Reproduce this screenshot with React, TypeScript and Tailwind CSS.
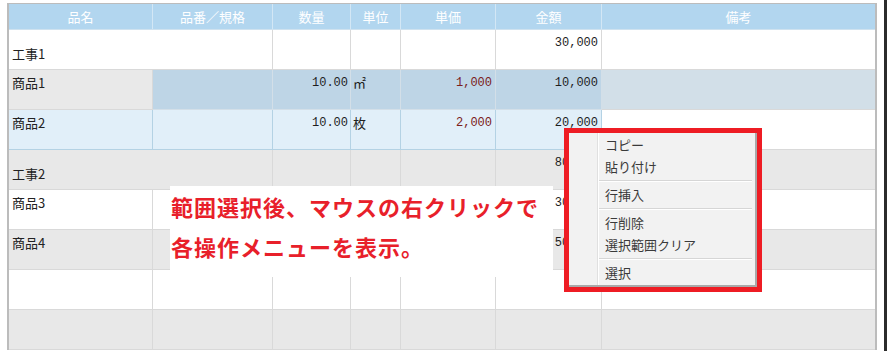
import React from "react";

const COLS = "grid grid-cols-[144px_120px_78px_50px_95px_106px_273px]";

const jp = { fontFamily: '"Noto Sans CJK JP", "Noto Sans", sans-serif' };
const mono = { fontFamily: '"Liberation Mono", "Noto Sans CJK JP", monospace' };

function NameCell({ text, bg, koji, span2, border }: { text: string; bg: string; koji?: boolean; span2?: boolean; border: string }) {
  return (
    <div
      className={`${span2 ? "col-span-2" : ""} ${bg} ${border} border-r border-b h-[40px] pl-[3px] ${koji ? "pt-[15px]" : "pt-[4px]"} text-[13px] leading-[18px] text-[#222]`}
      style={jp}
    >
      {text}
    </div>
  );
}

function NumCell({ text, bg, border, color, pr }: { text?: string; bg: string; border: string; color?: string; pr?: string }) {
  return (
    <div
      className={`${bg} ${border} border-r border-b h-[40px] ${pr ?? "pr-[2px]"} pt-[5px] text-right text-[12px] leading-[16px] ${color ?? "text-[#1e1e1e]"}`}
      style={mono}
    >
      {text}
    </div>
  );
}

function UnitCell({ text, bg, border }: { text?: string; bg: string; border: string }) {
  return (
    <div
      className={`${bg} ${border} border-r border-b h-[40px] pl-[2px] pt-[4px] text-[13px] leading-[18px] text-[#222]`}
      style={jp}
    >
      {text}
    </div>
  );
}

function Blank({ bg, border, last }: { bg: string; border: string; last?: boolean }) {
  return <div className={`${bg} ${border} ${last ? "" : "border-r"} border-b h-[40px]`} />;
}

function MenuItem({ label }: { label: string }) {
  return (
    <div className="h-[22px] pl-[36px] flex items-center text-[13px] text-[#3a3a3a]" style={jp}>
      {label}
    </div>
  );
}

function MenuSep() {
  return (
    <div className="h-[6px] flex flex-col justify-center ml-[30px] mr-[3px]">
      <div className="h-px bg-[#d6d6d6]" />
      <div className="h-px bg-white" />
    </div>
  );
}

export default function App() {
  const g = "border-[#d9d9d9]";
  return (
    <div className="relative w-[887px] h-[351px] bg-white overflow-hidden">
      <div className="flex h-full">
        <div className="pl-[7px] pt-[3px]">
          <div className="w-[870px] border-t border-l-2 border-r-2 border-[#bcbcbc]">
            {/* header */}
            <div className={`${COLS} h-[26px] bg-[#b2d6ef] border-b border-[#cfe2ef]`}>
              {["品名", "品番／規格", "数量", "単位", "単価", "金額", "備考"].map((h, i) => (
                <div
                  key={h}
                  className={`flex items-center justify-center text-[13px] text-white ${i < 6 ? "border-r border-[#d3e7f5]" : ""}`}
                  style={jp}
                >
                  {h}
                </div>
              ))}
            </div>

            {/* 工事1 */}
            <div className={COLS}>
              <NameCell text="工事1" bg="bg-white" koji span2 border={g} />
              <NumCell bg="bg-white" border={g} />
              <UnitCell bg="bg-white" border={g} />
              <NumCell bg="bg-white" border={g} />
              <NumCell text="30,000" bg="bg-white" border={g} pr="pr-[3px]" />
              <Blank bg="bg-white" border={g} last />
            </div>

            {/* 商品1 */}
            <div className={COLS}>
              <NameCell text="商品1" bg="bg-[#e9e9e9]" border={g} />
              <Blank bg="bg-[#bed5e6]" border="border-[#d3dfe8]" />
              <NumCell text="10.00" bg="bg-[#bed5e6]" border="border-[#d3dfe8]" />
              <UnitCell text="㎡" bg="bg-[#bed5e6]" border="border-[#d3dfe8]" />
              <NumCell text="1,000" bg="bg-[#bed5e6]" border="border-[#d3dfe8]" color="text-[#7a2020]" pr="pr-[3px]" />
              <NumCell text="10,000" bg="bg-[#bed5e6]" border="border-[#d3dfe8]" pr="pr-[3px]" />
              <Blank bg="bg-[#d2dfe8]" border={g} last />
            </div>

            {/* 商品2 */}
            <div className={COLS}>
              <NameCell text="商品2" bg="bg-[#e1eff9]" border="border-[#b4d2e4]" />
              <Blank bg="bg-[#e1eff9]" border="border-[#b4d2e4]" />
              <NumCell text="10.00" bg="bg-[#e1eff9]" border="border-[#b4d2e4]" />
              <UnitCell text="枚" bg="bg-[#e1eff9]" border="border-[#b4d2e4]" />
              <NumCell text="2,000" bg="bg-[#e1eff9]" border="border-[#b4d2e4]" color="text-[#7a2020]" pr="pr-[3px]" />
              <NumCell text="20,000" bg="bg-[#e1eff9]" border="border-[#b4d2e4]" pr="pr-[3px]" />
              <Blank bg="bg-white" border="border-[#d9d9d9]" last />
            </div>

            {/* 工事2 */}
            <div className={COLS}>
              <NameCell text="工事2" bg="bg-[#e8e8e8]" koji span2 border={g} />
              <NumCell bg="bg-[#e8e8e8]" border={g} />
              <UnitCell bg="bg-[#e8e8e8]" border={g} />
              <NumCell bg="bg-[#e8e8e8]" border={g} />
              <NumCell text="80,000" bg="bg-[#e8e8e8]" border={g} pr="pr-[3px]" />
              <Blank bg="bg-[#e8e8e8]" border={g} last />
            </div>

            {/* 商品3 */}
            <div className={COLS}>
              <NameCell text="商品3" bg="bg-white" border={g} />
              <Blank bg="bg-white" border={g} />
              <NumCell bg="bg-white" border={g} />
              <UnitCell bg="bg-white" border={g} />
              <NumCell bg="bg-white" border={g} />
              <NumCell text="30,000" bg="bg-white" border={g} pr="pr-[3px]" />
              <Blank bg="bg-white" border={g} last />
            </div>

            {/* 商品4 */}
            <div className={COLS}>
              <NameCell text="商品4" bg="bg-[#e8e8e8]" border={g} />
              <Blank bg="bg-[#e8e8e8]" border={g} />
              <NumCell bg="bg-[#e8e8e8]" border={g} />
              <UnitCell bg="bg-[#e8e8e8]" border={g} />
              <NumCell bg="bg-[#e8e8e8]" border={g} />
              <NumCell text="50,000" bg="bg-[#e8e8e8]" border={g} pr="pr-[3px]" />
              <Blank bg="bg-[#e8e8e8]" border={g} last />
            </div>

            {/* empty rows */}
            <div className={COLS}>
              {[0, 1, 2, 3, 4, 5, 6].map((i) => (
                <Blank key={i} bg="bg-white" border={g} last={i === 6} />
              ))}
            </div>
            <div className={COLS}>
              {[0, 1, 2, 3, 4, 5, 6].map((i) => (
                <Blank key={i} bg="bg-[#e8e8e8]" border={g} last={i === 6} />
              ))}
            </div>
          </div>
        </div>
        <div className="ml-[7px] w-[3px] h-full bg-[#2b2b2b]" />
      </div>

      {/* annotation */}
      <div
        className="absolute left-[170px] top-[186px] w-[383px] h-[91px] bg-white pl-[1px] text-[22px] leading-[40px] font-bold tracking-[1px] text-[#e8202a]"
        style={jp}
      >
        <div>範囲選択後、マウスの右クリックで</div>
        <div>各操作メニューを表示。</div>
      </div>

      {/* context menu with red highlight */}
      <div className="absolute left-[564px] top-[128px] w-[198px] h-[164px] border-[5px] border-[#ee1c24]">
        <div className="relative w-full h-full bg-[#f2f2f2] border-r-2 border-b-2 border-[#a9a9a9]">
          <div className="absolute left-[28px] top-0 bottom-0 w-px bg-[#e0e0e0]" />
          <div className="absolute left-[29px] top-0 bottom-0 w-px bg-white" />
          <div className="relative pt-px">
            <MenuItem label="コピー" />
            <MenuItem label="貼り付け" />
            <MenuSep />
            <MenuItem label="行挿入" />
            <MenuSep />
            <MenuItem label="行削除" />
            <MenuItem label="選択範囲クリア" />
            <MenuSep />
            <MenuItem label="選択" />
          </div>
        </div>
      </div>
    </div>
  );
}
